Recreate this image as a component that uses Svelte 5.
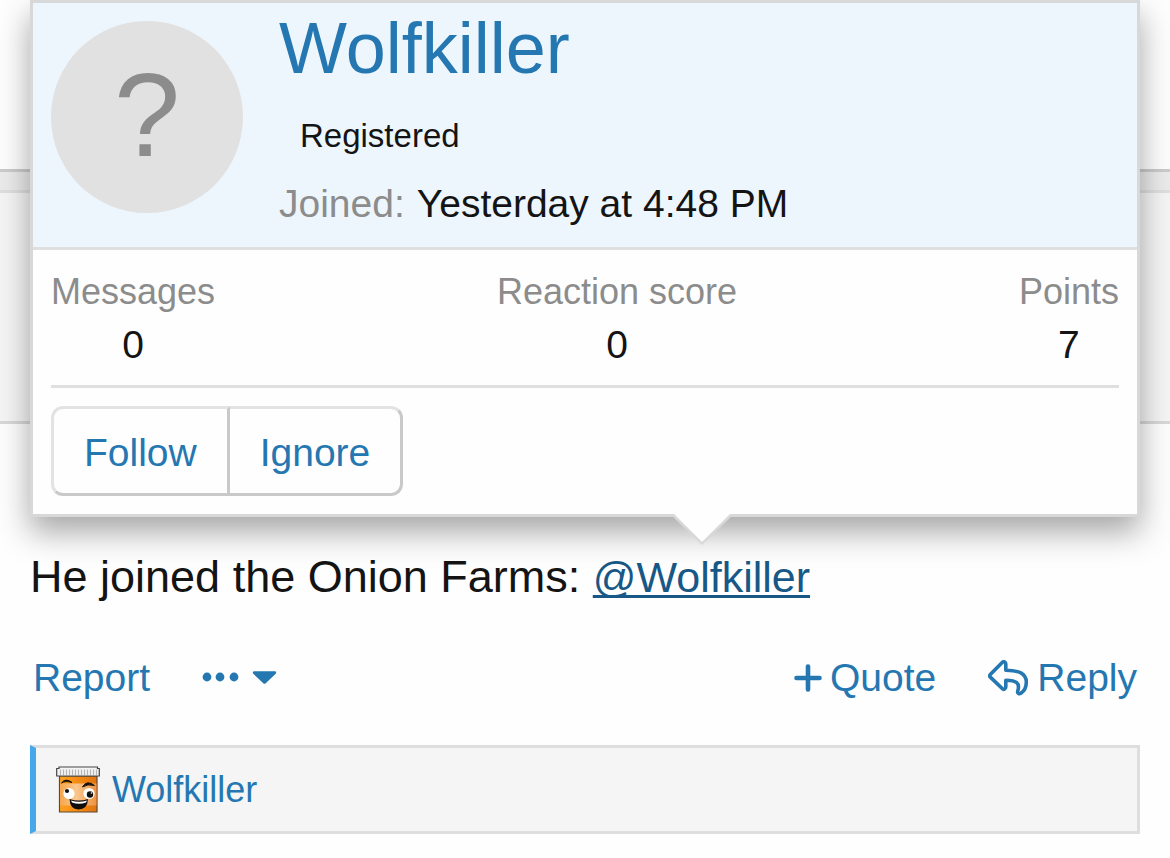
<script>
  const member = { name: 'Wolfkiller', title: 'Registered', joined: 'Yesterday at 4:48 PM' };
  const stats = [
    { label: 'Messages', value: 0 },
    { label: 'Reaction score', value: 0 },
    { label: 'Points', value: 7 }
  ];
</script>

<main class="page">
  <div class="previous-post"><div class="post-user"></div></div>

  <article class="post">
    <p class="message">He joined the Onion Farms: <a class="mention" href="#member">@{member.name}</a></p>

    <div class="action-bar">
      <div class="actions">
        <a href="#report">Report</a>
        <button class="more" type="button" aria-label="More options">
          <svg width="76" height="28" viewBox="0 0 76 28" aria-hidden="true">
            <g fill="currentColor">
              <circle cx="5" cy="13" r="4.400" />
              <circle cx="18" cy="13" r="4.400" />
              <circle cx="32" cy="13" r="4.400" />
              <path d="M52.300 7.300h20.400c1.400 0 2 1.500 1 2.500l-10 9.500c-.7.7-1.700.7-2.400 0l-10-9.500c-1-1-.4-2.500 1-2.500z" />
            </g>
          </svg>
        </button>
      </div>
      <div class="actions">
        <a class="with-icon" href="#quote">
          <svg width="28" height="28" viewBox="0 0 28 28" aria-hidden="true">
            <path d="M14 2.500v23M2.500 14h23" fill="none" stroke="currentColor" stroke-width="4.600" stroke-linecap="round" />
          </svg>
          Quote
        </a>
        <a class="with-icon" href="#reply">
          <svg width="41" height="36" viewBox="0 0 41 36" aria-hidden="true">
            <path
              d="M2.300 14.600 14.200 2.400C15.600 1 17.800 1.900 17.800 3.900V10.200C29.500 10.500 38.300 12.600 38.300 22.300C38.300 27.300 36.500 30.900 32.900 33.300C31.300 34.400 29.200 33.200 29.700 31.300C32.300 22.800 28.500 20.500 17.800 20.300V27.100C17.800 29.100 15.600 30 14.200 28.600L2.300 17.100C1.500 16.400 1.500 15.400 2.300 14.600Z"
              fill="none" stroke="currentColor" stroke-width="3.600" stroke-linejoin="round" />
          </svg>
          Reply
        </a>
      </div>
    </div>

    <div class="reactions">
      <svg width="44" height="48" viewBox="0 0 44 48" role="img" aria-label="Crazy pill">
        <defs>
          <linearGradient id="bottle" x1="0" x2="1" y1="0" y2="0">
            <stop offset="0" stop-color="#ffa21f" />
            <stop offset=".5" stop-color="#f58a12" />
            <stop offset="1" stop-color="#df7310" />
          </linearGradient>
          <linearGradient id="label" x1="0" x2="1" y1="0" y2="0">
            <stop offset="0" stop-color="#f6a64d" />
            <stop offset=".45" stop-color="#fac78d" />
            <stop offset="1" stop-color="#ef9340" />
          </linearGradient>
        </defs>
        <path d="M3.500 10H41V46H3.500Z" fill="url(#bottle)" stroke="#5b4a3a" stroke-width="1.200" />
        <path d="M4 17.500H40.500V39.500H4Z" fill="url(#label)" />
        <path d="M3 1H41.500V2.500H43.300V10H.7V2.500H3Z" fill="#f4f4f4" stroke="#454545" stroke-width="1.200" />
        <path d="M4.500 3.500v5.500M7.500 3.500v5.500M10.500 3.500v5.500M13.500 3.500v5.500M16.500 3.500v5.500M19.500 3.500v5.500M22.500 3.500v5.500M25.500 3.500v5.500M28.500 3.500v5.500M31.500 3.500v5.500M34.500 3.500v5.500M37.500 3.500v5.500M40.500 3.500v5.500" stroke="#b5b5b5" stroke-width="1.200" />
        <path d="M5.500 17Q9.500 11.500 16 16.500Q9.500 14.500 5.500 17ZM26.500 21Q31 13.500 38.500 19.500Q31.500 17.500 26.500 21Z" fill="#17120d" stroke="#17120d" />
        <circle cx="13" cy="27.500" r="5.600" fill="#fff" />
        <circle cx="11" cy="25" r="2.100" fill="#111" />
        <circle cx="33" cy="27.500" r="5.600" fill="#fff" />
        <circle cx="34" cy="28.500" r="3.200" fill="#111" />
        <circle cx="35.500" cy="27" r=".8" fill="#fff" />
        <path d="M13.500 33Q23 36 32 33Q31.500 43.500 22.500 43.500Q14 43.500 13.500 33Z" fill="#100d0b" />
        <path d="M15 34.500Q23 37 31 34.500L30 36.500Q23 39 16 36.500Z" fill="#fff" />
      </svg>
      <a href="#reactions">{member.name}</a>
    </div>
  </article>

  <section class="card" aria-label="Member card">
    <header class="card-header">
      <div class="avatar">?</div>
      <div class="info">
        <h2><a href="#member">{member.name}</a></h2>
        <p class="banner">{member.title}</p>
        <dl class="joined"><dt>Joined:</dt><dd>{member.joined}</dd></dl>
      </div>
    </header>
    <div class="card-body">
      <dl class="stats">
        {#each stats as stat}
          <div><dt>{stat.label}</dt><dd>{stat.value}</dd></div>
        {/each}
      </dl>
      <div class="buttons">
        <button type="button">Follow</button>
        <button type="button">Ignore</button>
      </div>
    </div>
    <svg class="pointer" width="64" height="32" viewBox="0 0 64 32" aria-hidden="true">
      <path d="M0 0H64L32 31Z" fill="#d8d8d8" />
      <path d="M4 0H60L32 28Z" fill="#fefefe" />
    </svg>
  </section>
</main>

<style>
  :global(body) {
    margin: 0;
    background: #fefefe;
  }
  .page {
    position: relative;
    padding-top: 169px;
    color: #141414;
    font-family: "Liberation Sans", Arial, sans-serif;
    font-size: 39px;
    line-height: 54px;
  }
  p, h2, dl, dd { margin: 0; }
  a {
    color: #2577b1;
    text-decoration: none;
  }
  svg { display: block; flex: none; }
  button {
    margin: 0;
    background: none;
    color: #2577b1;
    font: inherit;
    cursor: pointer;
  }
  .previous-post {
    padding-top: 18px;
    border-top: 3px solid #cbcbcb;
    border-bottom: 3px solid #d8d8d8;
    background: #ebebeb;
  }
  .post-user {
    height: 228px;
    border-top: 3px solid #dfdfdf;
    background: #f5f5f5;
  }
  .post { padding: 121px 30px 24px; }
  .message {
    font-size: 45px;
    line-height: 64px;
  }
  .mention {
    color: #185886;
    font-size: 43px;
    text-decoration: underline;
    text-decoration-thickness: 3px;
    text-underline-offset: 3px;
    text-decoration-skip-ink: none;
  }
  .action-bar {
    display: flex;
    justify-content: space-between;
    padding: 42px 3px 40px;
  }
  .actions {
    display: flex;
    align-items: center;
    gap: 52px;
  }
  .more {
    padding: 0;
    border: 0;
  }
  .with-icon {
    display: flex;
    align-items: center;
    gap: 8px;
  }
  .reactions {
    display: flex;
    align-items: center;
    gap: 12px;
    padding: 17px 20px;
    border: 3px solid #dedede;
    border-left: 6px solid #47a7eb;
    background: #f5f5f5;
    font-size: 36px;
    line-height: 49px;
  }
  .card {
    position: absolute;
    top: 0;
    left: 30px;
    right: 30px;
    border: 3px solid #d8d8d8;
    background: #fefefe;
    box-shadow: 0 15px 30px rgba(0, 0, 0, 0.35);
  }
  .card-header {
    display: flex;
    gap: 36px;
    padding: 18px 18px 16px;
    border-bottom: 3px solid #dfdfdf;
    background: #edf6fd;
  }
  .avatar {
    flex: none;
    width: 192px;
    height: 192px;
    border-radius: 50%;
    background: #e1e1e1;
    color: #8c8c8c;
    font-size: 119px;
    line-height: 187px;
    text-align: center;
  }
  h2 {
    font-size: 72px;
    font-weight: 400;
  }
  .banner {
    padding: 37px 21px 17px;
    font-size: 33px;
    line-height: 48px;
  }
  .joined {
    display: flex;
    gap: 12px;
  }
  dt { color: #8c8c8c; }
  .card-body { padding: 18px; }
  .stats {
    display: flex;
    justify-content: space-between;
    padding-bottom: 13px;
    border-bottom: 3px solid #dfdfdf;
    text-align: center;
  }
  .stats dt {
    padding-bottom: 2px;
    font-size: 36px;
    line-height: 48px;
  }
  .buttons {
    display: flex;
    margin-top: 18px;
  }
  .buttons button {
    padding: 17px 30px 13px;
    border: 3px solid;
    border-color: #e3e3e3 #c9c9c9 #c9c9c9 #e3e3e3;
    border-radius: 12px 0 0 12px;
  }
  .buttons button + button {
    border-left: 0;
    border-radius: 0 12px 12px 0;
  }
  .pointer {
    position: absolute;
    top: 100%;
    left: 637px;
  }
</style>
